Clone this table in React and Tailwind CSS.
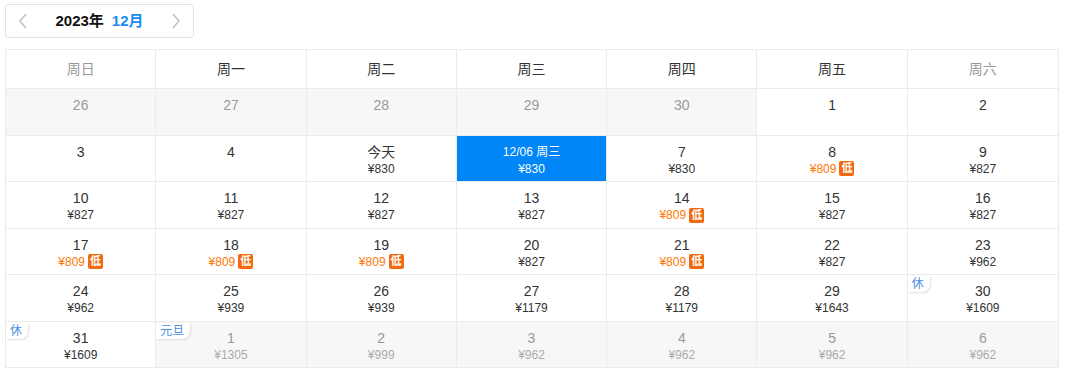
import React from 'react';

const rows = [
  [
    { d: '26', off: true }, { d: '27', off: true }, { d: '28', off: true }, { d: '29', off: true }, { d: '30', off: true },
    { d: '1' }, { d: '2' },
  ],
  [
    { d: '3' }, { d: '4' }, { d: '今天', p: '830' }, { d: '12/06 周三', p: '830', sel: true },
    { d: '7', p: '830' }, { d: '8', p: '809', low: true }, { d: '9', p: '827' },
  ],
  [
    { d: '10', p: '827' }, { d: '11', p: '827' }, { d: '12', p: '827' }, { d: '13', p: '827' },
    { d: '14', p: '809', low: true }, { d: '15', p: '827' }, { d: '16', p: '827' },
  ],
  [
    { d: '17', p: '809', low: true }, { d: '18', p: '809', low: true }, { d: '19', p: '809', low: true },
    { d: '20', p: '827' }, { d: '21', p: '809', low: true }, { d: '22', p: '827' }, { d: '23', p: '962' },
  ],
  [
    { d: '24', p: '962' }, { d: '25', p: '939' }, { d: '26', p: '939' }, { d: '27', p: '1179' },
    { d: '28', p: '1179' }, { d: '29', p: '1643' }, { d: '30', p: '1609', tag: '休' },
  ],
  [
    { d: '31', p: '1609', tag: '休' }, { d: '1', p: '1305', off: true, tag: '元旦' }, { d: '2', p: '999', off: true },
    { d: '3', p: '962', off: true }, { d: '4', p: '962', off: true }, { d: '5', p: '962', off: true }, { d: '6', p: '962', off: true },
  ],
];

const weekdays = ['周日', '周一', '周二', '周三', '周四', '周五', '周六'];

function Cell({ c, col }) {
  const last = col === 6;
  let base = 'relative h-[46.5px] flex flex-col items-center pt-[7px] border-t border-[#ebebeb]';
  if (!last) base += ' border-r';
  if (c.sel) {
    return (
      <div className={`${base} bg-[#0086f6] text-white`}>
        <span className="text-[12px] leading-[18px]">{c.d}</span>
        <span className="text-[12px] leading-[16px]">¥{c.p}</span>
      </div>
    );
  }
  return (
    <div className={`${base} ${c.off ? 'bg-[#f7f7f7]' : 'bg-white'}`}>
      {c.tag && (
        <span className="absolute top-[1px] left-0 bg-white pl-[4px] pr-[6px] text-[12px] leading-[16px] text-[#4a8fe0] rounded-br-[8px] shadow-[1px_1px_2px_rgba(0,0,0,0.12)]">
          {c.tag}
        </span>
      )}
      <span className={`text-[14px] leading-[18px] ${c.off ? 'text-[#999]' : 'text-[#333]'}`}>{c.d}</span>
      {c.p && (
        <span className="flex items-center gap-[3px]">
          <span className={`text-[12px] leading-[16px] ${c.low ? 'text-[#ff7700]' : c.off ? 'text-[#aaa]' : 'text-[#333]'}`}>¥{c.p}</span>
          {c.low && (
            <span className="w-[15px] h-[15px] bg-[#f26a10] text-white text-[11px] leading-[15px] text-center rounded-[2px] font-bold">低</span>
          )}
        </span>
      )}
    </div>
  );
}

export default function App() {
  return (
    <div className="w-[1080px] h-[381px] bg-white pl-[5px] pt-[4px]" style={{ fontFamily: '"Liberation Sans", "Noto Sans CJK SC", sans-serif' }}>
      <div className="w-[189px] h-[34px] border border-[#e3e3e3] rounded-[3px] flex items-center justify-between px-[12px]">
        <svg width="10" height="16" viewBox="0 0 10 16">
          <polyline points="8,1 2,8 8,15" fill="none" stroke="#bbb" strokeWidth="1.3" />
        </svg>
        <div className="flex items-baseline gap-[8px]">
          <span className="text-[15px] font-bold text-[#111]">2023年</span>
          <span className="text-[15px] font-bold text-[#1a8cf0]">12月</span>
        </div>
        <svg width="10" height="16" viewBox="0 0 10 16">
          <polyline points="2,1 8,8 2,15" fill="none" stroke="#bbb" strokeWidth="1.3" />
        </svg>
      </div>
      <div className="mt-[11px] w-[1054px] border border-[#ebebeb]">
        <div className="grid grid-cols-7">
          {weekdays.map((w, i) => (
            <div
              key={w}
              className={`h-[38px] flex items-center justify-center text-[14px] ${i === 0 || i === 6 ? 'text-[#999]' : 'text-[#333]'} ${i < 6 ? 'border-r border-[#ebebeb]' : ''}`}
            >
              {w}
            </div>
          ))}
        </div>
        {rows.map((r, ri) => (
          <div key={ri} className="grid grid-cols-7">
            {r.map((c, ci) => (
              <Cell key={ci} c={c} col={ci} />
            ))}
          </div>
        ))}
      </div>
    </div>
  );
}
